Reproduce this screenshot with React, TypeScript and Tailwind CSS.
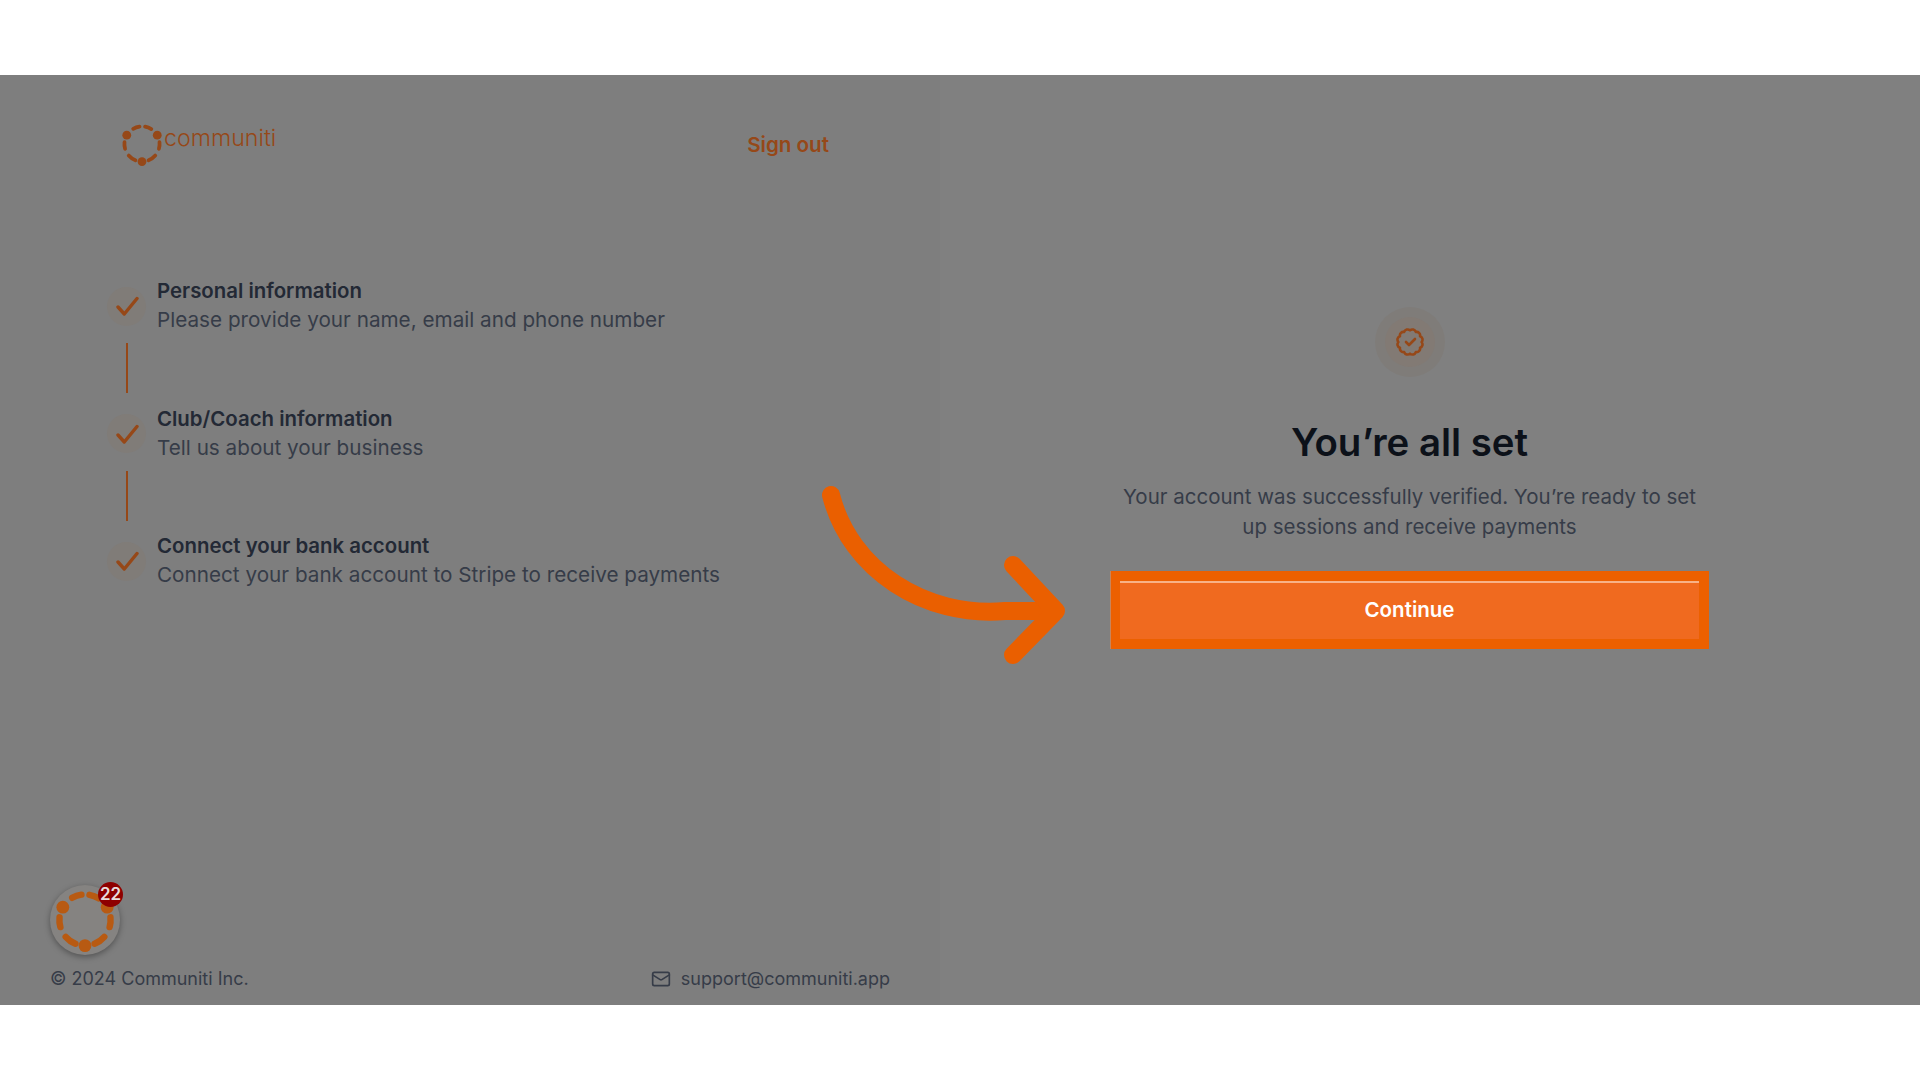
import { Mail } from 'lucide-react';

const steps = [
    { title: 'Personal information', text: 'Please provide your name, email and phone number' },
    { title: 'Club/Coach information', text: 'Tell us about your business' },
    { title: 'Connect your bank account', text: 'Connect your bank account to Stripe to receive payments' },
];

// dashed ring with three dots, used by the logo and the chat bubble
function arc(from: number, to: number) {
    const pt = (deg: number) => {
        const a = ((deg - 90) * Math.PI) / 180;
        return `${50 + 40 * Math.cos(a)} ${50 + 40 * Math.sin(a)}`;
    };
    return `M${pt(from)} A40 40 0 0 1 ${pt(to)}`;
}

function Ring({ className, stroke, weight }: { className: string; stroke: string; weight: number }) {
    const dashes = [
        [-30, -8], [10, 32],
        [84, 106], [131, 158],
        [202, 229], [254, 276],
    ];
    const dots = [60, 180, 300];
    return (
        <svg viewBox="0 0 100 100" className={className} fill="none">
            {dashes.map(([a, b]) => (
                <path key={a} d={arc(a, b)} stroke={stroke} strokeWidth={weight} strokeLinecap="round" />
            ))}
            {dots.map((d) => {
                const a = ((d - 90) * Math.PI) / 180;
                return <circle key={d} cx={50 + 40 * Math.cos(a)} cy={50 + 40 * Math.sin(a)} r="10" fill={stroke} />;
            })}
        </svg>
    );
}

// scalloped badge outline with a check inside
function VerifiedIcon() {
    const bumps = 12;
    const points = Array.from({ length: bumps }, (_, i) => {
        const a = (i * 2 * Math.PI) / bumps - Math.PI / 2;
        return `${14 + 11.6 * Math.cos(a)} ${14 + 11.6 * Math.sin(a)}`;
    });
    const d = `M${points[0]} ` + points.slice(1).concat(points[0]).map((p) => `A3.6 3.6 0 0 1 ${p}`).join(' ') + 'Z';
    return (
        <svg viewBox="0 0 28 28" className="h-7 w-7" fill="none" stroke="#964818" strokeWidth="2.6" strokeLinecap="round" strokeLinejoin="round">
            <path d={d} />
            <path d="M10 14l3 3 6-6" />
        </svg>
    );
}

function Step({ title, text, last }: { title: string; text: string; last?: boolean }) {
    return (
        <div className="flex flex-col">
            <div className="flex items-center gap-[11px]">
                <div className="flex h-[39px] w-[39px] shrink-0 items-center justify-center rounded-full bg-[#807c78]">
                    <svg viewBox="0 0 24 24" className="h-6 w-6" fill="none" stroke="#964818" strokeWidth="3.4" strokeLinecap="round" strokeLinejoin="round">
                        <path d="M3 13l6.3 7L22 4.5" />
                    </svg>
                </div>
                <div className="-translate-y-px leading-[29px]">
                    <div className="text-[20.4px] font-semibold text-[#232935]">{title}</div>
                    <div className="text-[20.7px] text-[#363c48]">{text}</div>
                </div>
            </div>
            {!last && <div className="mb-[11.5px] ml-[19px] mt-2 h-[50px] w-0.5 bg-[#964818]" />}
        </div>
    );
}

export default function App() {
    return (
        <div className='relative flex h-screen flex-col overflow-hidden bg-white font-["Inter",sans-serif]'>
            <div className="h-[75px] shrink-0" />
            <div className="flex h-[930px] shrink-0">
                {/* left column */}
                <div className="flex w-[940px] flex-col bg-[#7e7e7e]">
                    <div className="flex items-center justify-between pl-[120px] pr-[111px] pt-[47px]">
                        <div className="flex items-start">
                            <Ring className="h-11 w-11" stroke="#964818" weight={8.5} />
                            <span className="text-[23.2px] font-light leading-[32px] text-[#964818]">communiti</span>
                        </div>
                        <span className="mt-0.5 text-[20.6px] font-semibold text-[#964818]">Sign out</span>
                    </div>
                    <div className="mt-[111px] pl-[107px]">
                        {steps.map((s, i) => (
                            <Step key={s.title} title={s.title} text={s.text} last={i === steps.length - 1} />
                        ))}
                    </div>
                    <div className="mt-auto flex items-center justify-between pb-3 pl-[50px] pr-[50px] text-lg leading-[28px] text-[#363c48]">
                        <span>© 2024 Communiti Inc.</span>
                        <span className="flex items-center gap-2.5">
                            <Mail size={20} />
                            support@communiti.app
                        </span>
                    </div>
                </div>
                {/* right column */}
                <div className="flex flex-1 flex-col items-center bg-[#808080] pr-[41px] pt-[232px]">
                    <div className="flex h-[70px] w-[70px] items-center justify-center rounded-full bg-[#7f7c79]">
                        <div className="flex h-[50px] w-[50px] items-center justify-center rounded-full bg-[#827a74]">
                            <VerifiedIcon />
                        </div>
                    </div>
                    <h1 className="mt-[45.5px] text-[38.4px] font-semibold leading-[38px] text-[#0c1119]">You’re all set</h1>
                    <p className="mt-[21px] w-[590px] text-center text-[20.5px] leading-[30px] text-[#363c48]">
                        Your account was successfully verified. You’re ready to set up sessions and receive payments
                    </p>
                    <div className="mt-[29.5px] border-l border-[#c8855a]">
                        <div className="border-[10px] border-l-[9px] border-[#ec6000]">
                            <button className="block h-[58px] w-[579px] border-t-2 border-[#f8b287] bg-[#f06a1f] pb-0.5 text-[20.5px] font-semibold text-white">
                                Continue
                            </button>
                        </div>
                    </div>
                </div>
            </div>

            {/* chat bubble */}
            <div className="absolute left-[50px] top-[885px] flex h-[70px] w-[70px] items-center justify-center rounded-full bg-[#858381] shadow-[0_2px_6px_rgba(0,0,0,0.35)]">
                <Ring className="h-16 w-16" stroke="#b85a12" weight={10} />
                <div className="absolute left-[48px] top-[-3px] flex h-[25px] w-[25px] items-center justify-center rounded-full bg-[#8e0000] text-[17px] font-semibold text-[#e8dcdc]">22</div>
            </div>

            {/* arrow annotation */}
            <svg className="absolute left-[820px] top-[480px]" width="250" height="200" viewBox="820 480 250 200" fill="none" stroke="#ea5f00" strokeWidth="18" strokeLinecap="round" strokeLinejoin="round">
                <path d="M831 495C850 570 925 618 1005 611L1054 611" />
                <path d="M1013 565L1056 611L1013 655" />
            </svg>
        </div>
    );
}
